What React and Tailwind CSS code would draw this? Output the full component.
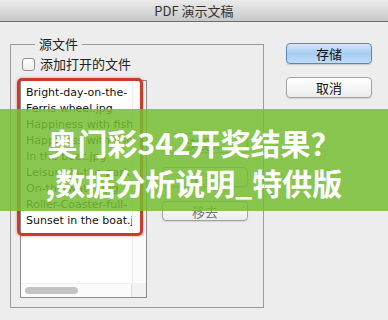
export default function App() {
  const files = [
    "Bright-day-on-the-",
    "Ferris wheel.jpg",
    "Happiness with fish",
    "Happiness with fish",
    "In the boat.jpg",
    "Leisure-in-the-park",
    "On-the-water.jpg",
    "Roller-Coaster-full-",
    "Sunset in the boat.jpg",
  ];
  const btn =
    "w-[86px] h-[20px] rounded-[4px] border border-[#a3a3a3] bg-gradient-to-b from-[#ffffff] to-[#ececec] shadow-[0_1px_1px_rgba(0,0,0,0.12)] flex items-center justify-center text-[13px] leading-none";
  return (
    <div className="relative w-[388px] h-[320px] overflow-hidden bg-[#ededed] font-['Noto_Sans_CJK_SC',sans-serif] text-[13px] text-[#222]">
      <div className="h-[22px] border-b border-[#6e6e6e] bg-gradient-to-b from-[#ececec] to-[#c8c8c8] flex items-center justify-center text-[13px] text-[#333] leading-none">
        PDF 演示文稿
      </div>
      <div className="flex pl-[10px] pt-[13px]">
        <fieldset className="w-[254px] h-[273px] border border-[#9c9c9c] px-[9px]">
          <legend className="ml-[15px] px-[4px] leading-[18px] text-[13px] text-[#222]">
            源文件
          </legend>
          <div className="mt-[2px] ml-[2px] flex items-center gap-[5px] h-[18px]">
            <div className="w-[13px] h-[13px] rounded-[3px] border border-[#8e8e8e] bg-gradient-to-b from-white to-[#eeeeee]" />
            <span className="leading-[18px]">添加打开的文件</span>
          </div>
          <div className="mt-[7px] flex">
            <div className="relative w-[127px] h-[218px] border border-[#8c8c8c] bg-white flex flex-col">
              <div className="flex flex-1 min-h-0">
                <div className="flex-1 min-w-0 overflow-hidden pt-[4px] pl-[5px] font-['DejaVu_Sans',sans-serif] text-[11px] text-[#111]">
                  {files.map((f, i) => (
                    <div key={i} className="h-[16px] leading-[16px] whitespace-nowrap">
                      {f}
                    </div>
                  ))}
                </div>
                <div className="w-[14px] bg-[#fbfbfb] border-l border-[#ececec]" />
              </div>
              <div className="h-[14px] flex border-t border-[#f0f0f0]">
                <div className="flex-1 flex items-center pl-[4px] bg-[#fbfbfb]">
                  <div className="w-[53px] h-[7px] rounded-full bg-[#c4c4c4]" />
                </div>
                <div className="w-[15px] bg-[#f2f2f2] border-l border-[#dddddd]" />
              </div>
              <div className="absolute left-[-4px] top-[-3px] w-[126px] h-[158px] rounded-[5px] border-[3px] border-[#cd3a29] shadow-[0_0_3px_rgba(205,58,41,0.55)] pointer-events-none" />
            </div>
            <div className="ml-[15px] pt-[53px] flex flex-col gap-[14px]">
              <div className={`${btn} text-[#222]`}>浏览...</div>
              <div className={`${btn} text-[#777]`}>复制</div>
              <div className={`${btn} text-[#777]`}>移去</div>
            </div>
          </div>
        </fieldset>
        <div className="ml-[22px] mt-[8px] flex flex-col gap-[13px]">
          <div className="w-[86px] h-[21px] rounded-[4px] border border-[#5a86c2] bg-gradient-to-b from-[#d6e8fb] via-[#a6ccf2] to-[#c2ddf7] shadow-[0_1px_1px_rgba(0,0,0,0.15)] flex items-center justify-center text-[13px] leading-none text-[#111]">
            存储
          </div>
          <div className="w-[86px] h-[21px] rounded-[4px] border border-[#a3a3a3] bg-gradient-to-b from-[#ffffff] to-[#ececec] shadow-[0_1px_1px_rgba(0,0,0,0.12)] flex items-center justify-center text-[13px] leading-none text-[#111]">
            取消
          </div>
        </div>
      </div>
      <div className="absolute left-0 right-0 top-[109px] h-[102px] bg-[#76bd31]/85 flex flex-col items-center justify-center pt-[4px] text-white font-bold text-[30px] leading-[40px]">
        <div>奥门彩342开奖结果？</div>
        <div>,数据分析说明_特供版</div>
      </div>
    </div>
  );
}
